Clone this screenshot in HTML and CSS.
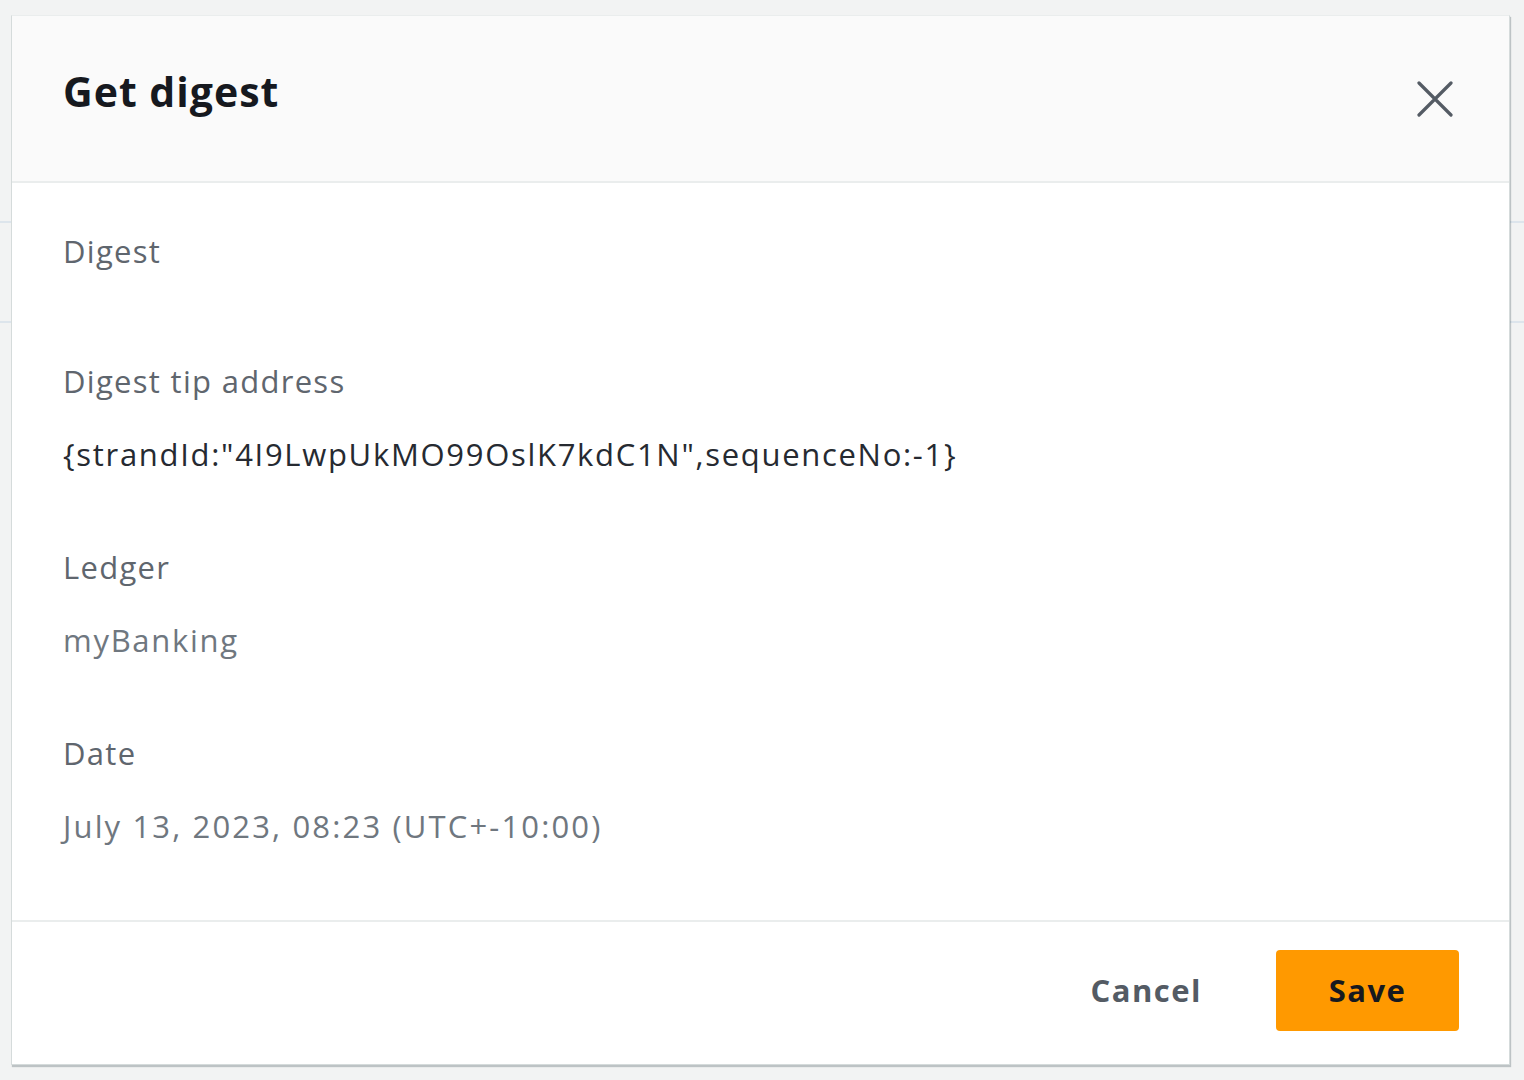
FILE: index.html
```html
<!DOCTYPE html>
<html lang="en">
<head>
<meta charset="utf-8">
<title>Get digest</title>
<link rel="stylesheet" href="styles.css">
</head>
<body>
<div class="modal" role="dialog" aria-labelledby="modal-title">
  <header class="modal-header">
    <h2 id="modal-title" class="modal-title">Get digest</h2>
    <button class="close-btn" aria-label="Close">
      <svg width="36" height="36" viewBox="0 0 36 36" aria-hidden="true">
        <path d="M2 2 L34 34 M34 2 L2 34" stroke="#545b64" stroke-width="3.2" stroke-linecap="round" fill="none"/>
      </svg>
    </button>
  </header>
  <div class="modal-body">
    <div class="field">
      <div class="label">Digest</div>
      <div class="value empty"></div>
    </div>
    <div class="field">
      <div class="label">Digest tip address</div>
      <div class="value dark">{strandId:"4I9LwpUkMO99OslK7kdC1N",sequenceNo:-1}</div>
    </div>
    <div class="field">
      <div class="label">Ledger</div>
      <div class="value">myBanking</div>
    </div>
    <div class="field">
      <div class="label">Date</div>
      <div class="value numeric">July 13, 2023, 08:23 (UTC+-10:00)</div>
    </div>
  </div>
  <footer class="modal-footer">
    <button class="btn btn-link">Cancel</button>
    <button class="btn btn-primary">Save</button>
  </footer>
</div>
</body>
</html>
```
FILE: styles.css
```css
* { box-sizing: border-box; }

html, body { margin: 0; padding: 0; }

body {
  width: 1524px;
  height: 1080px;
  overflow: hidden;
  font-family: "Open Sans", "Noto Sans", sans-serif;
  background-color: #f2f3f3;
  background-image:
    linear-gradient(to bottom,
      transparent 221px, #dde5ec 221px, #dde5ec 223px, transparent 223px,
      transparent 321px, #dde5ec 321px, #dde5ec 323px, transparent 323px);
  padding-top: 15px;
  padding-left: 11px;
}

.modal {
  width: 1499px;
  height: 1050px;
  background: #ffffff;
  border: 1px solid #d5dbdb;
  border-top-color: #eaeded;
  box-shadow: 1px 2px 1px rgba(0, 28, 36, 0.22);
  display: flex;
  flex-direction: column;
}

.modal-header {
  height: 167px;
  background: #fafafa;
  border-bottom: 2px solid #eaeded;
  display: flex;
  align-items: center;
  justify-content: space-between;
  padding: 0 56px 0 51px;
}

.modal-title {
  margin: 0;
  font-size: 41px;
  font-weight: 700;
  color: #16191f;
  line-height: 1;
  letter-spacing: 1px;
  margin-top: -14px;
}

.close-btn {
  background: none;
  border: 0;
  padding: 0;
  width: 36px;
  height: 36px;
  cursor: pointer;
  display: flex;
}

.modal-body {
  flex: 1;
  padding: 46px 51px 0 51px;
  display: flex;
  flex-direction: column;
  gap: 69px;
}

.label {
  font-size: 31px;
  line-height: 44px;
  color: #5f666e;
  letter-spacing: 1.3px;
}

.value {
  font-size: 31px;
  line-height: 44px;
  color: #6f777f;
  margin-top: 29px;
  letter-spacing: 1.7px;
}

.value.dark { color: #262a31; }

.value.numeric { letter-spacing: 2.15px; }

.value.empty {
  height: 0;
  margin-top: 17px;
}

.modal-footer {
  height: 144px;
  border-top: 2px solid #eaeded;
  display: flex;
  align-items: center;
  justify-content: flex-end;
  gap: 22px;
  padding: 0 50px 6px 0;
}

.btn {
  font-family: inherit;
  font-size: 31px;
  font-weight: 700;
  height: 81px;
  border-radius: 4px;
  border: 0;
  padding: 0 52px;
  cursor: pointer;
  letter-spacing: 1.5px;
}

.btn-link {
  background: transparent;
  color: #545b64;
}

.btn-primary {
  background: #ff9900;
  color: #16191f;
  width: 183px;
  padding: 0;
}
```
